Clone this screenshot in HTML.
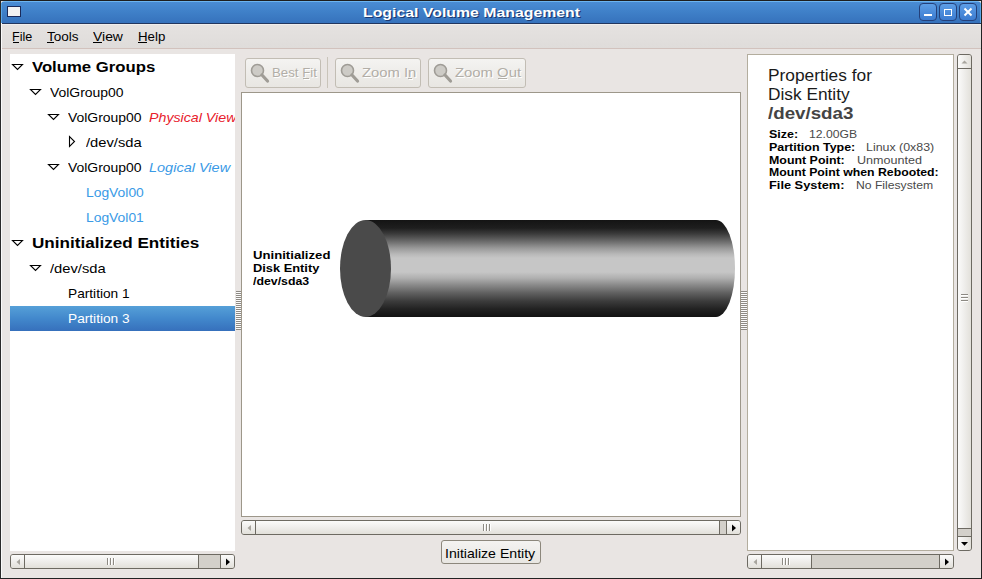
<!DOCTYPE html>
<html><head><meta charset="utf-8">
<style>
*{box-sizing:border-box;margin:0;padding:0}
html,body{width:982px;height:579px;overflow:hidden;background:#222;font-family:"Liberation Sans",sans-serif;}
.a{position:absolute}
.tx{position:absolute;line-height:1;white-space:nowrap;transform-origin:0 0}
#win{position:absolute;left:0;top:0;width:981px;height:578px;background:#e9e5e3;overflow:hidden}
.wb{position:absolute;top:3px;width:18px;height:18px;border:1px solid #24407a;border-radius:4px;background:linear-gradient(#5d9ee6,#3b7bd0)}
.white{position:absolute;background:#fff}
.sb{position:absolute;border:1px solid #8c877c;border-radius:3px;background:#d9d5ce;overflow:hidden}
.btn{position:absolute;border:1px solid #a9a49a;border-radius:3px;background:linear-gradient(#f4f3f1,#e8e6e2);}
</style></head><body>
<div id="win">
  <!-- border -->
  <div class="a" style="left:0;top:0;width:1px;height:578px;background:#2a2a2a"></div>
  <!-- title -->
  <div class="a" style="left:0;top:0;width:981px;height:1px;background:#1e1e1e"></div>
  <div class="a" style="left:1px;top:1px;width:980px;height:22px;background:linear-gradient(#6cb4f0 0,#6cb4f0 1px,#4a8cd4 1px,#3f80c8 50%,#3672bc 100%);border-radius:4px 4px 0 0;"></div>
  <div class="a" style="left:1px;top:23px;width:980px;height:1px;background:#22365e"></div>
  <div class="a" style="left:1px;top:3px;width:1px;height:20px;background:#5aa6e6"></div>
  <div class="a" style="left:980px;top:3px;width:1px;height:20px;background:#5aa6e6"></div>
  <div class="a" style="left:7px;top:6px;width:14px;height:11px;background:#f2f2f2;border:1px solid #1a2a5a"></div>
  <div class="wb" style="left:919px"><div class="a" style="left:4px;top:10px;width:8px;height:2px;background:#fff"></div></div>
  <div class="wb" style="left:939px"><div class="a" style="left:4px;top:5px;width:8px;height:7px;border:1px solid #fff"></div></div>
  <div class="wb" style="left:959px"><svg class="a" style="left:0;top:0" width="16" height="16"><path d="M4.5 4.5L11.5 11.5M11.5 4.5L4.5 11.5" stroke="#fff" stroke-width="2"/></svg></div>

  <!-- menubar -->
  <div class="a" style="left:1px;top:24px;width:980px;height:24px;background:linear-gradient(#f0eeec 0,#f0eeec 1px,#e5e2e0 1px,#dfdcda)"></div>
  <div class="a" style="left:1px;top:48px;width:980px;height:1px;background:#d2c2bd"></div>
  <div class="a" style="left:13px;top:42px;width:6px;height:1px;background:#000"></div>
  <div class="a" style="left:47px;top:42px;width:7px;height:1px;background:#000"></div>
  <div class="a" style="left:93px;top:42px;width:9px;height:1px;background:#000"></div>
  <div class="a" style="left:138px;top:42px;width:9px;height:1px;background:#000"></div>

  <!-- left tree -->
  <div class="white" style="left:10px;top:54px;width:225px;height:497px"></div>
  <div class="a" style="left:10px;top:306px;width:225px;height:25px;background:linear-gradient(#56a0d8,#4288cc 50%,#3670bc)"></div>
  <svg class="a" style="left:0;top:0" width="240" height="340">
    <g fill="none" stroke="#000" stroke-width="1.1">
      <path d="M12.5 64.5H22.5L17.5 69.5Z"/>
      <path d="M30.5 89.5H40.5L35.5 94.5Z"/>
      <path d="M48.5 114.5H58.5L53.5 119.5Z"/>
      <path d="M69.5 136.5V146.5L74.5 141.5Z"/>
      <path d="M48.5 164.5H58.5L53.5 169.5Z"/>
      <path d="M12.5 240.5H22.5L17.5 245.5Z"/>
      <path d="M30.5 265.5H40.5L35.5 270.5Z"/>
    </g>
  </svg>
  <!-- pane handle grips -->
  <div class="a" style="left:236px;top:291px;width:5px;height:39px;background:repeating-linear-gradient(#8e8a84 0 1px,#fbfbfb 1px 2px)"></div>
  <div class="a" style="left:741px;top:291px;width:6px;height:39px;background:repeating-linear-gradient(#8e8a84 0 1px,#fbfbfb 1px 2px)"></div>

  <!-- toolbar -->
  <div class="btn" style="left:245px;top:58px;width:76px;height:30px;border-color:#c2bdb4"></div>
  <div class="a" style="left:327px;top:57px;width:1px;height:31px;background:#c9c4ba"></div>
  <div class="btn" style="left:335px;top:58px;width:86px;height:30px;border-color:#c2bdb4"></div>
  <div class="btn" style="left:428px;top:58px;width:98px;height:30px;border-color:#c2bdb4"></div>

  <svg class="a" style="left:0;top:0" width="560" height="100">
    <g id="mag" fill="#cdcbc6" stroke="#9f9c96" stroke-width="1.6">
      <circle cx="257.5" cy="70.5" r="6"/>
      <path d="M262 75L267.5 81" stroke-width="3.2" stroke-linecap="round"/>
    </g>
    <g fill="#cdcbc6" stroke="#9f9c96" stroke-width="1.6">
      <circle cx="347.5" cy="70.5" r="6"/>
      <path d="M352 75L357.5 81" stroke-width="3.2" stroke-linecap="round"/>
      <circle cx="440.5" cy="70.5" r="6"/>
      <path d="M445 75L450.5 81" stroke-width="3.2" stroke-linecap="round"/>
    </g>
  </svg>
  <div class="a" style="left:303px;top:78px;width:6px;height:1px;background:#b2aea7;box-shadow:1px 1px 0 #fff"></div>
  <div class="a" style="left:408px;top:78px;width:4px;height:1px;background:#b2aea7;box-shadow:1px 1px 0 #fff"></div>
  <div class="a" style="left:498px;top:78px;width:9px;height:1px;background:#b2aea7;box-shadow:1px 1px 0 #fff"></div>
  <!-- canvas -->
  <div class="white" style="left:241px;top:92px;width:500px;height:425px;border:1px solid #9d978a"></div>
  <svg class="a" style="left:330px;top:210px" width="420" height="120">
    <defs>
      <linearGradient id="cyl" gradientUnits="userSpaceOnUse" x1="0" y1="10" x2="0" y2="107">
        <stop offset="0.000" stop-color="#141414"/>
        <stop offset="0.082" stop-color="#1e1e1e"/>
        <stop offset="0.144" stop-color="#3c3c3c"/>
        <stop offset="0.216" stop-color="#686868"/>
        <stop offset="0.289" stop-color="#989898"/>
        <stop offset="0.351" stop-color="#b8b8b8"/>
        <stop offset="0.392" stop-color="#c6c6c6"/>
        <stop offset="0.536" stop-color="#c6c6c6"/>
        <stop offset="0.598" stop-color="#b0b0b0"/>
        <stop offset="0.670" stop-color="#8a8a8a"/>
        <stop offset="0.753" stop-color="#606060"/>
        <stop offset="0.835" stop-color="#3c3c3c"/>
        <stop offset="0.918" stop-color="#222222"/>
        <stop offset="1.000" stop-color="#121212"/>
      </linearGradient>
    </defs>
    <path d="M35 10H386A19 48.5 0 0 1 386 107H35Z" fill="url(#cyl)"/>
    <ellipse cx="35.5" cy="58.5" rx="25.5" ry="48.5" fill="#4a4a4a"/>
  </svg>

  <!-- initialize button -->
  <div class="btn" style="left:441px;top:540px;width:100px;height:24px;border-color:#8c877c"></div>

  <!-- props -->
  <div class="white" style="left:747px;top:54px;width:207px;height:497px;border:1px solid #b3ad9e"></div>
  <!-- right border / bottom -->
  <div class="a" style="left:1px;top:23px;width:1px;height:555px;background:#fafafa"></div>
<div class="a" style="left:10px;top:554px;width:225px;height:15px;background:#d3d0ca;border:1px solid #6d6a62;border-radius:3px;overflow:hidden">
<div class="a" style="left:0;top:0;width:188px;height:13px;background:linear-gradient(#fbfbfa,#f1f0ee 40%,#e2e0da);border-right:1px solid #6d6a62"></div>
<div class="a" style="left:13px;top:0;width:1px;height:13px;background:#6d6a62"></div>
<div class="a" style="left:209px;top:0;width:14px;height:13px;background:linear-gradient(#fbfbfa,#f1f0ee 40%,#e2e0da);border-left:1px solid #6d6a62"></div>
</div>
<svg class="a" style="left:15px;top:558px" width="6" height="8"><path d="M5 1V7L1.5 4Z" fill="#a8a59e"/></svg>
<svg class="a" style="left:225px;top:558px" width="6" height="8"><path d="M1 0.5V7.5L5 4Z" fill="#000"/></svg>
<div class="a" style="left:107px;top:558px;width:1px;height:7px;background:#8d8a83;box-shadow:1px 0 0 #fff"></div>
<div class="a" style="left:110px;top:558px;width:1px;height:7px;background:#8d8a83;box-shadow:1px 0 0 #fff"></div>
<div class="a" style="left:113px;top:558px;width:1px;height:7px;background:#8d8a83;box-shadow:1px 0 0 #fff"></div>
<div class="a" style="left:241px;top:520px;width:500px;height:15px;background:#d3d0ca;border:1px solid #6d6a62;border-radius:3px;overflow:hidden">
<div class="a" style="left:0;top:0;width:478px;height:13px;background:linear-gradient(#fbfbfa,#f1f0ee 40%,#e2e0da);border-right:1px solid #6d6a62"></div>
<div class="a" style="left:13px;top:0;width:1px;height:13px;background:#6d6a62"></div>
<div class="a" style="left:484px;top:0;width:14px;height:13px;background:linear-gradient(#fbfbfa,#f1f0ee 40%,#e2e0da);border-left:1px solid #6d6a62"></div>
</div>
<svg class="a" style="left:246px;top:524px" width="6" height="8"><path d="M5 1V7L1.5 4Z" fill="#a8a59e"/></svg>
<svg class="a" style="left:731px;top:524px" width="6" height="8"><path d="M1 0.5V7.5L5 4Z" fill="#000"/></svg>
<div class="a" style="left:483px;top:524px;width:1px;height:7px;background:#8d8a83;box-shadow:1px 0 0 #fff"></div>
<div class="a" style="left:486px;top:524px;width:1px;height:7px;background:#8d8a83;box-shadow:1px 0 0 #fff"></div>
<div class="a" style="left:489px;top:524px;width:1px;height:7px;background:#8d8a83;box-shadow:1px 0 0 #fff"></div>
<div class="a" style="left:747px;top:554px;width:207px;height:15px;background:#d3d0ca;border:1px solid #6d6a62;border-radius:3px;overflow:hidden">
<div class="a" style="left:0;top:0;width:64px;height:13px;background:linear-gradient(#fbfbfa,#f1f0ee 40%,#e2e0da);border-right:1px solid #6d6a62"></div>
<div class="a" style="left:13px;top:0;width:1px;height:13px;background:#6d6a62"></div>
<div class="a" style="left:191px;top:0;width:14px;height:13px;background:linear-gradient(#fbfbfa,#f1f0ee 40%,#e2e0da);border-left:1px solid #6d6a62"></div>
</div>
<svg class="a" style="left:752px;top:558px" width="6" height="8"><path d="M5 1V7L1.5 4Z" fill="#a8a59e"/></svg>
<svg class="a" style="left:944px;top:558px" width="6" height="8"><path d="M1 0.5V7.5L5 4Z" fill="#000"/></svg>
<div class="a" style="left:782px;top:558px;width:1px;height:7px;background:#8d8a83;box-shadow:1px 0 0 #fff"></div>
<div class="a" style="left:785px;top:558px;width:1px;height:7px;background:#8d8a83;box-shadow:1px 0 0 #fff"></div>
<div class="a" style="left:788px;top:558px;width:1px;height:7px;background:#8d8a83;box-shadow:1px 0 0 #fff"></div>
<div class="a" style="left:957px;top:54px;width:15px;height:497px;background:#d3d0ca;border:1px solid #6d6a62;border-radius:3px;overflow:hidden">
<div class="a" style="left:0;top:0;width:13px;height:474px;background:linear-gradient(90deg,#fbfbfa,#f1f0ee 40%,#e2e0da);border-bottom:1px solid #6d6a62"></div>
<div class="a" style="left:0;top:13px;width:13px;height:1px;background:#6d6a62"></div>
<div class="a" style="left:0;top:481px;width:13px;height:14px;background:linear-gradient(90deg,#fbfbfa,#f1f0ee 40%,#e2e0da);border-top:1px solid #6d6a62"></div>
</div>
<div class="a" style="left:961px;top:294px;width:7px;height:1px;background:#8d8a83;box-shadow:0 1px 0 #fff"></div>
<div class="a" style="left:961px;top:297px;width:7px;height:1px;background:#8d8a83;box-shadow:0 1px 0 #fff"></div>
<div class="a" style="left:961px;top:300px;width:7px;height:1px;background:#8d8a83;box-shadow:0 1px 0 #fff"></div>
<svg class="a" style="left:961px;top:59px" width="8" height="6"><path d="M0.5 4.5H6.5L3.5 1.5Z" fill="#a8a59e"/></svg>
<svg class="a" style="left:961px;top:541px" width="8" height="6"><path d="M0 1H7L3.5 4.8Z" fill="#000"/></svg>
<div class="tx" style="left:362.5px;top:5.5px;font-size:13px;color:#fff;font-weight:bold;transform:scaleX(1.218);text-shadow:1px 1px 0 rgba(20,40,90,.8);">Logical Volume Management</div>
<div class="tx" style="left:12.4px;top:29.7px;font-size:13px;color:#000;transform:scaleX(0.965);">File</div>
<div class="tx" style="left:47.0px;top:29.7px;font-size:13px;color:#000;transform:scaleX(1.040);">Tools</div>
<div class="tx" style="left:92.6px;top:29.7px;font-size:13px;color:#000;transform:scaleX(1.071);">View</div>
<div class="tx" style="left:137.5px;top:29.7px;font-size:13px;color:#000;transform:scaleX(1.019);">Help</div>
<div class="tx" style="left:31.6px;top:59.5px;font-size:14px;color:#000;font-weight:bold;transform:scaleX(1.194);">Volume Groups</div>
<div class="tx" style="left:49.6px;top:85.5px;font-size:13px;color:#000;transform:scaleX(1.072);">VolGroup00</div>
<div class="tx" style="left:67.6px;top:110.5px;font-size:13px;color:#000;transform:scaleX(1.072);">VolGroup00</div>
<div class="tx" style="left:85.6px;top:135.5px;font-size:13px;color:#000;transform:scaleX(1.133);">/dev/sda</div>
<div class="tx" style="left:67.6px;top:160.5px;font-size:13px;color:#000;transform:scaleX(1.072);">VolGroup00</div>
<div class="tx" style="left:85.6px;top:185.5px;font-size:13px;color:#3a9ae6;transform:scaleX(1.066);">LogVol00</div>
<div class="tx" style="left:85.6px;top:210.5px;font-size:13px;color:#3a9ae6;transform:scaleX(1.066);">LogVol01</div>
<div class="tx" style="left:31.6px;top:235.5px;font-size:14px;color:#000;font-weight:bold;transform:scaleX(1.221);">Uninitialized Entities</div>
<div class="tx" style="left:49.6px;top:261.5px;font-size:13px;color:#000;transform:scaleX(1.133);">/dev/sda</div>
<div class="tx" style="left:67.6px;top:286.5px;font-size:13px;color:#000;transform:scaleX(1.053);">Partition 1</div>
<div class="tx" style="left:67.6px;top:311.5px;font-size:13px;color:#fff;transform:scaleX(1.053);">Partition 3</div>
<div class="a" style="left:0;top:0;width:235px;height:200px;overflow:hidden"><div class="tx" style="left:149.2px;top:110.5px;font-size:13px;color:#e8202c;font-style:italic;transform:scaleX(1.093);">Physical View</div></div>
<div class="tx" style="left:149.2px;top:160.5px;font-size:13px;color:#3a9ae6;font-style:italic;transform:scaleX(1.115);">Logical View</div>
<div class="tx" style="left:271.6px;top:65.8px;font-size:13px;color:#b2aea7;transform:scaleX(1.019);text-shadow:1px 1px 0 #fff;">Best Fit</div>
<div class="tx" style="left:361.8px;top:65.8px;font-size:13px;color:#b2aea7;transform:scaleX(1.138);text-shadow:1px 1px 0 #fff;">Zoom In</div>
<div class="tx" style="left:454.5px;top:65.8px;font-size:13px;color:#b2aea7;transform:scaleX(1.143);text-shadow:1px 1px 0 #fff;">Zoom Out</div>
<div class="tx" style="left:252.8px;top:249.8px;font-size:11px;color:#000;font-weight:bold;transform:scaleX(1.195);">Uninitialized</div>
<div class="tx" style="left:252.8px;top:262.8px;font-size:11px;color:#000;font-weight:bold;transform:scaleX(1.167);">Disk Entity</div>
<div class="tx" style="left:252.6px;top:275.8px;font-size:11px;color:#000;font-weight:bold;transform:scaleX(1.120);">/dev/sda3</div>
<div class="tx" style="left:445.2px;top:546.8px;font-size:13px;color:#000;transform:scaleX(1.085);">Initialize Entity</div>
<div class="tx" style="left:767.8px;top:67.6px;font-size:16px;color:#1a1a1a;transform:scaleX(1.082);">Properties for</div>
<div class="tx" style="left:767.8px;top:86.7px;font-size:16px;color:#1a1a1a;transform:scaleX(1.080);">Disk Entity</div>
<div class="tx" style="left:767.8px;top:105.6px;font-size:16px;color:#444;font-weight:bold;transform:scaleX(1.171);">/dev/sda3</div>
<div class="tx" style="left:768.7px;top:128.8px;font-size:11px;color:#000;font-weight:bold;transform:scaleX(1.132);">Size:</div>
<div class="tx" style="left:809.2px;top:128.8px;font-size:11px;color:#4a4a4a;transform:scaleX(1.107);">12.00GB</div>
<div class="tx" style="left:768.7px;top:141.7px;font-size:11px;color:#000;font-weight:bold;transform:scaleX(1.132);">Partition Type:</div>
<div class="tx" style="left:866.4px;top:141.7px;font-size:11px;color:#4a4a4a;transform:scaleX(1.127);">Linux (0x83)</div>
<div class="tx" style="left:768.7px;top:154.5px;font-size:11px;color:#000;font-weight:bold;transform:scaleX(1.127);">Mount Point:</div>
<div class="tx" style="left:856.5px;top:154.5px;font-size:11px;color:#4a4a4a;transform:scaleX(1.143);">Unmounted</div>
<div class="tx" style="left:768.7px;top:167.4px;font-size:11px;color:#000;font-weight:bold;transform:scaleX(1.115);">Mount Point when Rebooted:</div>
<div class="tx" style="left:768.7px;top:180.2px;font-size:11px;color:#000;font-weight:bold;transform:scaleX(1.164);">File System:</div>
<div class="tx" style="left:855.7px;top:180.2px;font-size:11px;color:#4a4a4a;transform:scaleX(1.106);">No Filesystem</div>
</div>
</body></html>
